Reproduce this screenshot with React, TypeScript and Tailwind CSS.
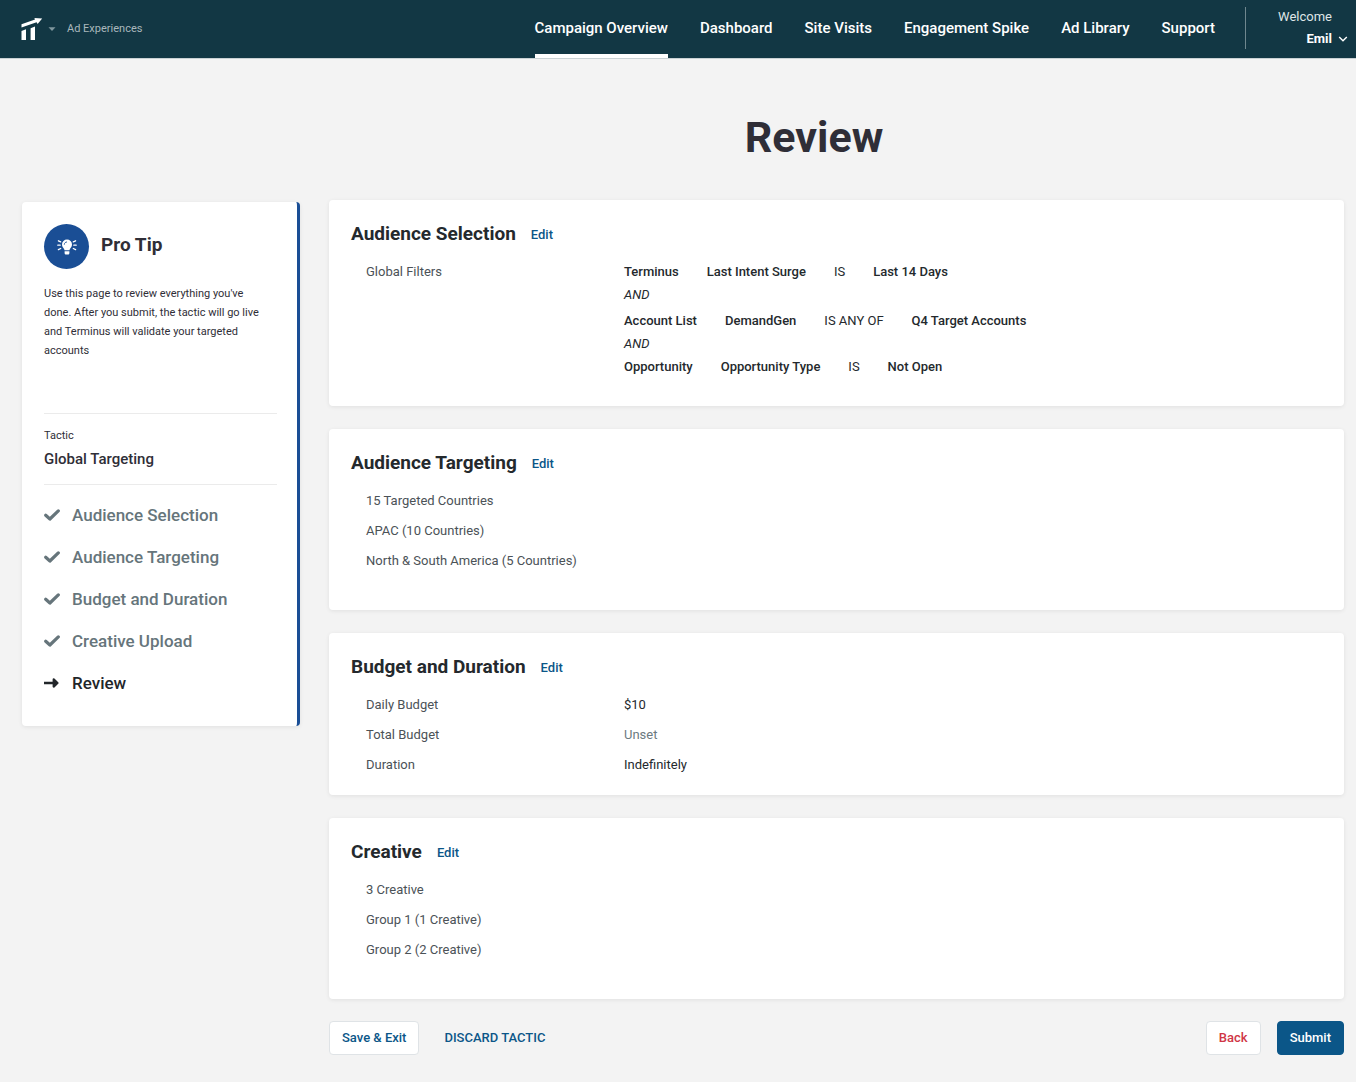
import type { ReactNode } from "react";

const navItems = [
  "Campaign Overview",
  "Dashboard",
  "Site Visits",
  "Engagement Spike",
  "Ad Library",
  "Support",
];

const doneSteps = [
  "Audience Selection",
  "Audience Targeting",
  "Budget and Duration",
  "Creative Upload",
];

const filters = [
  { source: "Terminus", field: "Last Intent Surge", op: "IS", value: "Last 14 Days" },
  { source: "Account List", field: "DemandGen", op: "IS ANY OF", value: "Q4 Target Accounts" },
  { source: "Opportunity", field: "Opportunity Type", op: "IS", value: "Not Open" },
];

const budget = [
  { label: "Daily Budget", value: "$10" },
  { label: "Total Budget", value: "Unset", muted: true },
  { label: "Duration", value: "Indefinitely" },
];

function Logo() {
  return (
    <svg className="h-6 w-6" viewBox="0 0 24 24" fill="#fff" aria-hidden="true">
      <path d="M1.5 7.200 15 2.600 14.400 1 22.200 1.400 17.600 7.100 16.600 5.200 1.500 10.600z" />
      <path d="M1.5 14 6 12.300V23H1.500z" />
      <path d="M10.600 11.300 15 9.600V23h-4.400z" />
    </svg>
  );
}

function BulbIcon() {
  return (
    <svg className="h-5 w-5" viewBox="0 0 20 20" fill="none" aria-hidden="true">
      <path
        d="M10 2.600a5 5 0 0 0-5 5c0 2 1.100 3 1.900 4.100.4.6.5 1 .6 1.600h5c.1-.6.2-1 .6-1.600.8-1.100 1.900-2.100 1.900-4.100a5 5 0 0 0-5-5z"
        fill="#fff"
      />
      <path d="M7.600 14.200h4.800v1.700c0 .9-.7 1.600-1.600 1.600H9.200c-.9 0-1.600-.7-1.600-1.600z" fill="#fff" />
      <path d="M7.300 7.300c.1-1.300.9-2.100 2.300-2.300" stroke="#1a4e95" strokeWidth=".9" strokeLinecap="round" />
      <path
        d="M.8 8.200h2.400M16.800 8.200h2.400M1.400 3.800l2.300 1.100M18.600 3.800l-2.300 1.100M1.400 12.600l2.300-1.100M18.600 12.600l-2.300-1.100"
        stroke="#fff"
        strokeWidth="1.300"
        strokeLinecap="round"
      />
    </svg>
  );
}

function CheckIcon() {
  return (
    <svg className="h-4 w-4" viewBox="0 0 16 16" fill="none" stroke="currentColor" aria-hidden="true">
      <path d="M1.700 8.300 5.900 12 14.300 3.900" strokeWidth="3.200" strokeLinecap="round" strokeLinejoin="round" />
    </svg>
  );
}

function ArrowIcon() {
  return (
    <svg className="h-4 w-4" viewBox="0 0 16 16" fill="none" stroke="currentColor" aria-hidden="true">
      <path d="M.6 8H12" strokeWidth="2.600" strokeLinecap="round" />
      <path d="M9.700 4.400 13.500 8 9.700 11.600z" fill="currentColor" strokeWidth="2.200" strokeLinejoin="round" />
    </svg>
  );
}

function Header() {
  return (
    <header className="flex h-[59px] items-stretch justify-between border-b border-[#c9d1d4] bg-[#123744] text-white">
      <button className="flex items-center pl-5">
        <Logo />
        <svg className="ml-1 h-2 w-2" viewBox="0 0 8 8" fill="#7f979e" aria-hidden="true">
          <path d="M.5 2.200h7L4 6z" />
        </svg>
        <span className="ml-[11px] text-[11px] text-[#a9b7bc]">Ad Experiences</span>
      </button>
      <div className="flex items-stretch">
        <nav className="flex gap-8">
          {navItems.map((item, i) => (
            <a
              key={item}
              href="#"
              className={
                i === 0
                  ? "flex items-center border-b-4 border-white pt-0.5 text-[15px] font-medium"
                  : "flex items-center pb-0.5 text-[15px] font-medium"
              }
            >
              {item}
            </a>
          ))}
        </nav>
        <div className="mt-[7px] mb-[9px] ml-[30px] w-px bg-[#6f878f]" />
        <button className="flex w-[110px] flex-col items-end justify-center pr-2 pb-0.5 text-[13px] leading-[22px]">
          <span className="pr-4 text-[#dfe5e7]">Welcome</span>
          <span className="flex items-center gap-1.5 font-bold">
            Emil
            <svg className="h-2.5 w-2.5" viewBox="0 0 10 10" fill="none" stroke="#fff" strokeWidth="1.400" aria-hidden="true">
              <path d="M1.200 3 5 6.800 8.800 3" />
            </svg>
          </span>
        </button>
      </div>
    </header>
  );
}

function Sidebar() {
  return (
    <aside className="mt-0.5 w-[278px] shrink-0 rounded border-r-[3px] border-[#1a4e95] bg-white py-[22px] pr-5 pl-[22px] shadow-[0_1px_4px_rgba(0,0,0,0.08)]">
      <div className="flex items-center gap-3">
        <div className="flex h-[45px] w-[45px] items-center justify-center rounded-full bg-[#1a4e95]">
          <BulbIcon />
        </div>
        <h2 className="pb-0.5 text-[19px] font-bold text-[#2f2e37]">Pro Tip</h2>
      </div>
      <p className="mt-[15px] pr-2.5 text-[11px] leading-[19px] text-[#2f2e37]">
        Use this page to review everything you've done. After you submit, the tactic will go live
        and Terminus will validate your targeted accounts
      </p>
      <div className="mt-[53px] border-y border-[#ebebeb] py-3 text-[#2f2e37]">
        <p className="text-[11px] leading-5">Tactic</p>
        <p className="text-[15px] leading-[26px] font-medium">Global Targeting</p>
      </div>
      <ol className="mt-[9px] text-[17px] leading-[42px] font-medium text-[#66757b]">
        {doneSteps.map((step) => (
          <li key={step} className="flex items-center gap-3">
            <CheckIcon />
            {step}
          </li>
        ))}
        <li className="flex items-center gap-3 text-[#22262a]">
          <ArrowIcon />
          Review
        </li>
      </ol>
    </aside>
  );
}

function Card({ title, className, children }: { title: string; className: string; children: ReactNode }) {
  return (
    <section className={`rounded bg-white px-[22px] pt-[21px] shadow-[0_1px_4px_rgba(0,0,0,0.08)] ${className}`}>
      <div className="flex items-center gap-[15px] leading-[26px]">
        <h2 className="text-[19px] font-bold text-[#24292d]">{title}</h2>
        <a href="#" className="pt-0.5 text-[13px] leading-6 font-medium text-[#0b5688]">
          Edit
        </a>
      </div>
      <div className="mt-[10px] pl-[15px] text-[13px] text-[#4b5257]">{children}</div>
    </section>
  );
}

function Lines({ items }: { items: string[] }) {
  return (
    <ul className="leading-[30px]">
      {items.map((item) => (
        <li key={item}>{item}</li>
      ))}
    </ul>
  );
}

export default function App() {
  return (
    <div className="min-h-screen bg-[#f3f3f3] font-['Roboto',sans-serif]">
      <Header />
      <h1 className="pt-[52px] pb-[37px] pl-[272px] text-center text-[43px] leading-[52px] font-bold text-[#2f2e37]">
        Review
      </h1>
      <div className="flex items-start gap-[29px] pr-3 pb-7 pl-[22px]">
        <Sidebar />
        <main className="min-w-0 flex-1">
          <div className="flex flex-col gap-[23px]">
            <Card title="Audience Selection" className="pb-7">
              <div className="flex">
                <span className="w-[258px] shrink-0 leading-[30px]">Global Filters</span>
                <div className="pt-[3px] leading-[23px] text-[#24292d]">
                  {filters.map((f, i) => (
                    <div key={f.source} className={i === 1 ? "pt-[3px]" : ""}>
                      <div className="flex gap-7">
                        <span className="font-medium">{f.source}</span>
                        <span className="font-medium">{f.field}</span>
                        <span>{f.op}</span>
                        <span className="font-medium">{f.value}</span>
                      </div>
                      {i < filters.length - 1 && <em className="block">AND</em>}
                    </div>
                  ))}
                </div>
              </div>
            </Card>

            <Card title="Audience Targeting" className="pb-[34px]">
              <Lines items={["15 Targeted Countries", "APAC (10 Countries)", "North & South America (5 Countries)"]} />
            </Card>

            <Card title="Budget and Duration" className="pb-[15px]">
              <dl className="leading-[30px]">
                {budget.map((row) => (
                  <div key={row.label} className="flex">
                    <dt className="w-[258px]">{row.label}</dt>
                    <dd className={row.muted ? "text-[#6c7a80]" : "text-[#24292d]"}>{row.value}</dd>
                  </div>
                ))}
              </dl>
            </Card>

            <Card title="Creative" className="pb-[34px]">
              <Lines items={["3 Creative", "Group 1 (1 Creative)", "Group 2 (2 Creative)"]} />
            </Card>
          </div>

          <div className="mt-[22px] flex items-center justify-between text-[13px] font-medium">
            <div className="flex items-center gap-[25px]">
              <button className="h-[34px] rounded border border-[#dfe3e6] bg-white px-3 text-[#0b5688]">
                Save &amp; Exit
              </button>
              <button className="text-[#0b5688]">DISCARD TACTIC</button>
            </div>
            <div className="flex gap-4">
              <button className="h-[34px] rounded border border-[#dfe3e6] bg-white px-3 text-[#d03545]">
                Back
              </button>
              <button className="h-[34px] rounded border border-[#0b5688] bg-[#0b5688] px-3 text-white">
                Submit
              </button>
            </div>
          </div>
        </main>
      </div>
    </div>
  );
}
